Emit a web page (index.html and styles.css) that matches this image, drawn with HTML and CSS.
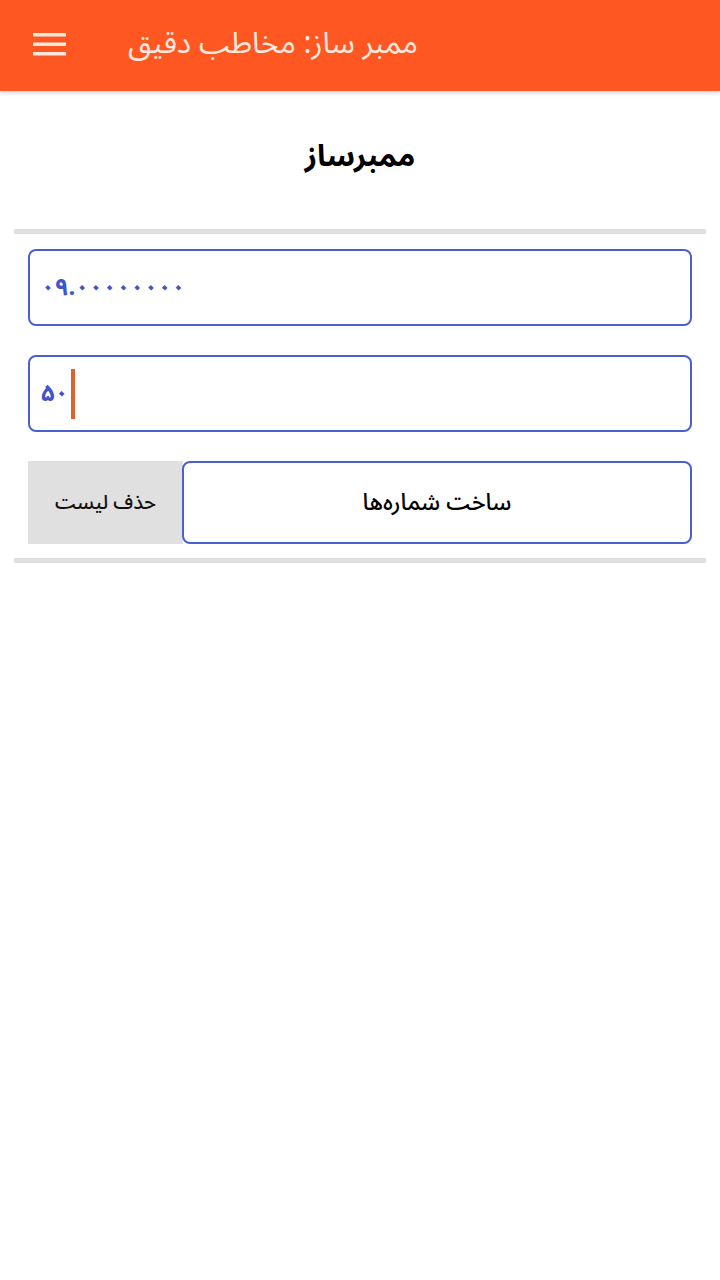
FILE: index.html
```html
<!DOCTYPE html>
<html lang="fa">
<head>
<meta charset="utf-8">
<link rel="stylesheet" href="styles.css">
</head>
<body>
<header class="appbar">
  <div class="menu-btn">
    <svg width="34" height="24" viewBox="0 0 34 24"><rect x="0" y="1" width="33" height="3.5" fill="#fbe9df"/><rect x="0" y="10.5" width="33" height="3.5" fill="#fbe9df"/><rect x="0" y="20" width="33" height="3.5" fill="#fbe9df"/></svg>
  </div>
  <div class="appbar-title" dir="rtl">ممبر ساز: مخاطب دقیق</div>
</header>
<main class="content">
  <h1 class="heading" dir="rtl">ممبرساز</h1>
  <div class="divider"></div>
  <div class="form">
    <div class="field"><span class="field-text">۰۹.۰۰۰۰۰۰۰۰</span></div>
    <div class="field"><span class="field-text">۵۰</span><span class="caret"></span></div>
    <div class="actions">
      <div class="btn-clear" dir="rtl">حذف لیست</div>
      <div class="btn-make" dir="rtl">ساخت شماره‌ها</div>
    </div>
  </div>
  <div class="divider"></div>
</main>
</body>
</html>
```
FILE: styles.css
```css
html, body {
  margin: 0;
  padding: 0;
  background: #ffffff;
  font-family: "Noto Sans Arabic", "DejaVu Sans", "Noto Sans", sans-serif;
}
.appbar {
  height: 91px;
  background: #ff5722;
  display: flex;
  align-items: center;
  padding: 0 0 0 33px;
  box-shadow: 0 2px 4px rgba(0,0,0,0.18);
  box-sizing: border-box;
}
.menu-btn {
  width: 34px;
  height: 24px;
  display: flex;
  margin-top: -4px;
}
.appbar-title {
  margin-left: 61px;
  color: #fbe9df;
  font-size: 30px;
  line-height: 1;
  margin-top: -4px;
}
.content {
  padding: 0 14px;
}
.heading {
  margin: 0;
  padding-top: 44px;
  height: 94px;
  font-size: 30px;
  font-weight: bold;
  text-align: center;
  color: #000;
  line-height: 44px;
  box-sizing: content-box;
}
.divider {
  height: 5px;
  background: #e0e0e0;
}
.form {
  padding: 15px 14px 14px;
  display: flex;
  flex-direction: column;
  gap: 29px;
}
.field {
  height: 77px;
  border: 2px solid #4a5fd0;
  border-radius: 8px;
  box-sizing: border-box;
  display: flex;
  align-items: center;
  padding-left: 11px;
}
.field-text {
  color: #3f55c8;
  font-size: 24px;
  font-weight: bold;
  letter-spacing: -1.5px;
  font-family: "Noto Sans Arabic", "DejaVu Sans", sans-serif;
}
.caret {
  width: 4px;
  height: 50px;
  background: #e0622a;
  margin-left: 3px;
}
.actions {
  display: flex;
  height: 83px;
}
.btn-clear {
  width: 155px;
  background: #e0e0e0;
  display: flex;
  align-items: center;
  justify-content: center;
  font-size: 20px;
  font-weight: 500;
  color: #111;
}
.btn-make {
  flex: 1;
  border: 2px solid #4a5fd0;
  border-radius: 8px;
  margin-left: -1px;
  background: #fff;
  display: flex;
  align-items: center;
  justify-content: center;
  font-size: 23px;
  font-weight: 500;
  color: #000;
  box-sizing: border-box;
}
```
